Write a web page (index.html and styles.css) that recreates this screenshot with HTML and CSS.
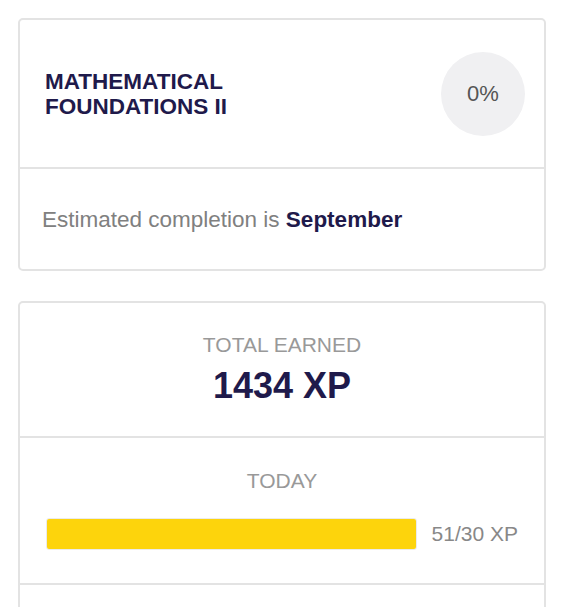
FILE: index.html
```html
<!DOCTYPE html>
<html>
<head>
<meta charset="utf-8">
<link rel="stylesheet" href="styles.css">
</head>
<body>
<div class="page">
  <div class="card">
    <div class="course">
      <div class="course-title">MATHEMATICAL<br>FOUNDATIONS II</div>
      <div class="progress-circle">0%</div>
    </div>
    <div class="estimate">Estimated completion is <strong>September</strong></div>
  </div>

  <div class="card">
    <div class="total">
      <div class="label">TOTAL EARNED</div>
      <div class="total-value">1434 XP</div>
    </div>
    <div class="today">
      <div class="label">TODAY</div>
      <div class="today-row">
        <div class="bar"><div class="bar-fill" style="width:100%"></div></div>
        <div class="bar-text">51/30 XP</div>
      </div>
    </div>
    <div class="more"></div>
  </div>
</div>
</body>
</html>
```
FILE: styles.css
```css
* { box-sizing: border-box; }
html, body { margin: 0; padding: 0; background: #fff; }
body {
  font-family: "Liberation Sans", Arial, sans-serif;
  color: #1f1a4b;
  overflow: hidden;
}
.page {
  padding: 18px 25px 0 18px;
  display: flex;
  flex-direction: column;
  gap: 30px;
}
.card {
  border: 2px solid #e3e3e3;
  border-radius: 5px;
  background: #fff;
}
.course {
  display: flex;
  align-items: center;
  justify-content: space-between;
  padding: 32px 19px 31px 25px;
  border-bottom: 2px solid #e3e3e3;
}
.course-title {
  font-size: 22.5px;
  font-weight: bold;
  line-height: 25px;
  color: #1f1a4b;
}
.progress-circle {
  width: 84px;
  height: 84px;
  border-radius: 50%;
  background: #f0f0f2;
  display: flex;
  align-items: center;
  justify-content: center;
  font-size: 22px;
  color: #555;
}
.estimate {
  padding: 38px 22px 36px 22px;
  font-size: 22.5px;
  line-height: 26px;
  color: #808080;
}
.estimate strong { color: #1f1a4b; font-weight: bold; }
.total {
  padding: 30px 20px 30px;
  text-align: center;
  border-bottom: 2px solid #e3e3e3;
}
.label {
  font-size: 21px;
  line-height: 23px;
  color: #999;
  text-align: center;
}
.total-value {
  margin-top: 9px;
  font-size: 36px;
  line-height: 41px;
  font-weight: bold;
  color: #1f1a4b;
}
.today {
  padding: 31px 26px 33px 26px;
  border-bottom: 2px solid #e3e3e3;
}
.today-row {
  margin-top: 26px;
  display: flex;
  align-items: center;
  gap: 15px;
}
.bar {
  flex: 1;
  height: 32px;
  border: 1px solid #ebebeb;
  border-radius: 3px;
  overflow: hidden;
  background: #f3f3f3;
}
.bar-fill {
  height: 100%;
  background: #fdd40c;
}
.bar-text {
  font-size: 21px;
  color: #888;
  white-space: nowrap;
}
.more { height: 60px; }
```
